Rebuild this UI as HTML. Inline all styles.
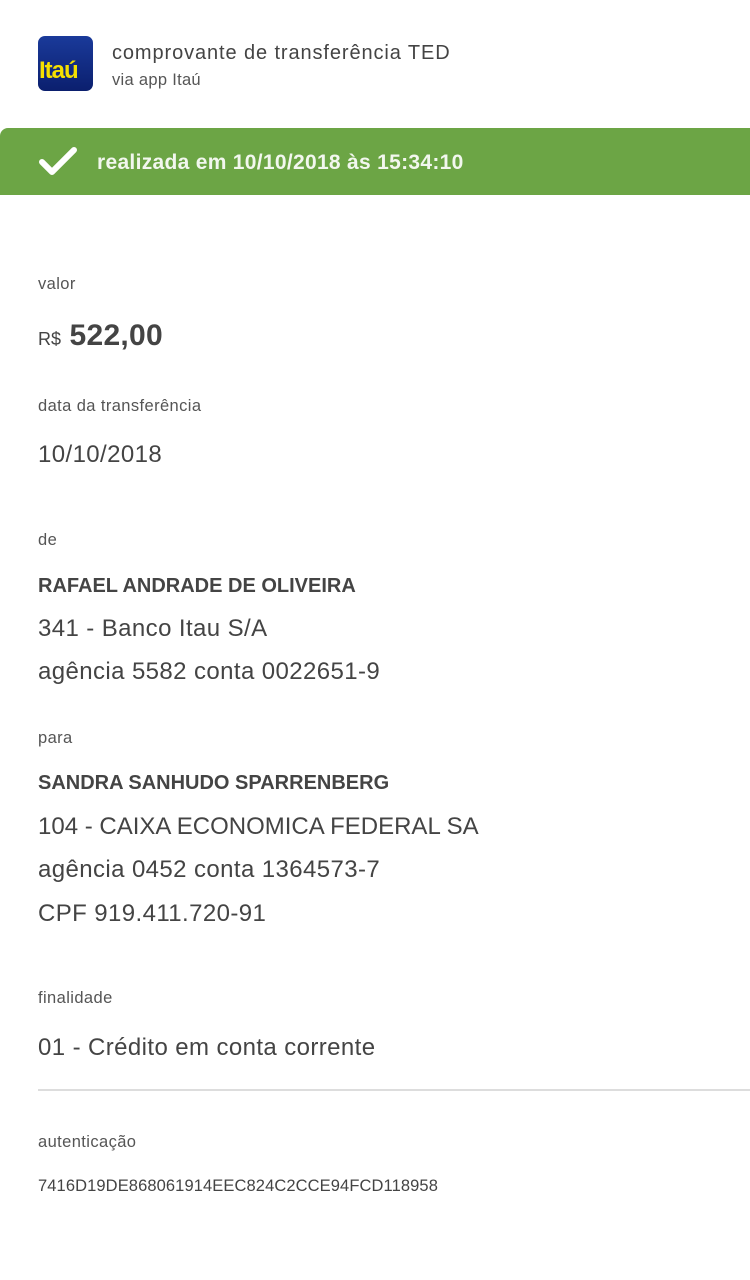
<!DOCTYPE html>
<html><head><meta charset="utf-8"><style>
body{margin:0;width:750px;height:1280px;background:#fff;font-family:"Liberation Sans",sans-serif;color:#444;position:relative;overflow:hidden}
.a{position:absolute;white-space:nowrap;line-height:1}
.l{font-size:16.5px;color:#555;left:38px;letter-spacing:0.4px}
.v{font-size:24px;color:#444;left:38px;letter-spacing:0.4px}
.b{font-size:20px;font-weight:bold;color:#444;left:38px}
</style></head><body>
<div class="a" style="left:38px;top:36px;width:55px;height:55px;border-radius:7px;background:linear-gradient(#1a3a9a,#0b1f6e);"><span class="a" style="left:1px;top:23px;font-size:24px;font-weight:bold;color:#f5e000;letter-spacing:-1px">Itaú</span></div>
<div class="a" style="left:112px;top:43px;font-size:20px;color:#444;letter-spacing:0.9px">comprovante de transferência TED</div>
<div class="a" style="left:112px;top:72px;font-size:16.5px;color:#555;letter-spacing:0.3px">via app Itaú</div>
<div class="a" style="left:0;top:128px;width:750px;height:67px;background:#6ca545;border-radius:8px 0 0 0"></div>
<svg class="a" style="left:38px;top:146px" width="40" height="32" viewBox="0 0 40 32"><path d="M4 16 L14 26 L36 4" stroke="#fff" stroke-width="6" fill="none" stroke-linecap="round" stroke-linejoin="round"/></svg>
<div class="a" style="left:97px;top:152px;font-size:21px;font-weight:bold;color:#f2f7ee;letter-spacing:0.3px">realizada em 10/10/2018 às 15:34:10</div>
<div class="a l" style="top:276px">valor</div>
<div class="a" style="left:38px;top:321px;color:#444"><span style="font-size:18px">R$</span> <span style="font-size:30px;font-weight:bold;margin-left:4px;letter-spacing:0.3px">522,00</span></div>
<div class="a l" style="top:398px">data da transferência</div>
<div class="a v" style="top:443px">10/10/2018</div>
<div class="a l" style="top:532px">de</div>
<div class="a b" style="top:576px">RAFAEL ANDRADE DE OLIVEIRA</div>
<div class="a v" style="top:617px">341 - Banco Itau S/A</div>
<div class="a v" style="top:660px">agência 5582 conta 0022651-9</div>
<div class="a l" style="top:730px">para</div>
<div class="a b" style="top:773px">SANDRA SANHUDO SPARRENBERG</div>
<div class="a v" style="top:815px;letter-spacing:0">104 - CAIXA ECONOMICA FEDERAL SA</div>
<div class="a v" style="top:858px">agência 0452 conta 1364573-7</div>
<div class="a v" style="top:902px">CPF 919.411.720-91</div>
<div class="a l" style="top:990px">finalidade</div>
<div class="a v" style="top:1036px">01 - Crédito em conta corrente</div>
<div class="a" style="left:38px;top:1089px;width:712px;height:2px;background:#ddd"></div>
<div class="a l" style="top:1134px">autenticação</div>
<div class="a" style="left:38px;top:1178px;font-size:16.5px;color:#444;letter-spacing:0.1px">7416D19DE868061914EEC824C2CCE94FCD118958</div>
</body></html>
